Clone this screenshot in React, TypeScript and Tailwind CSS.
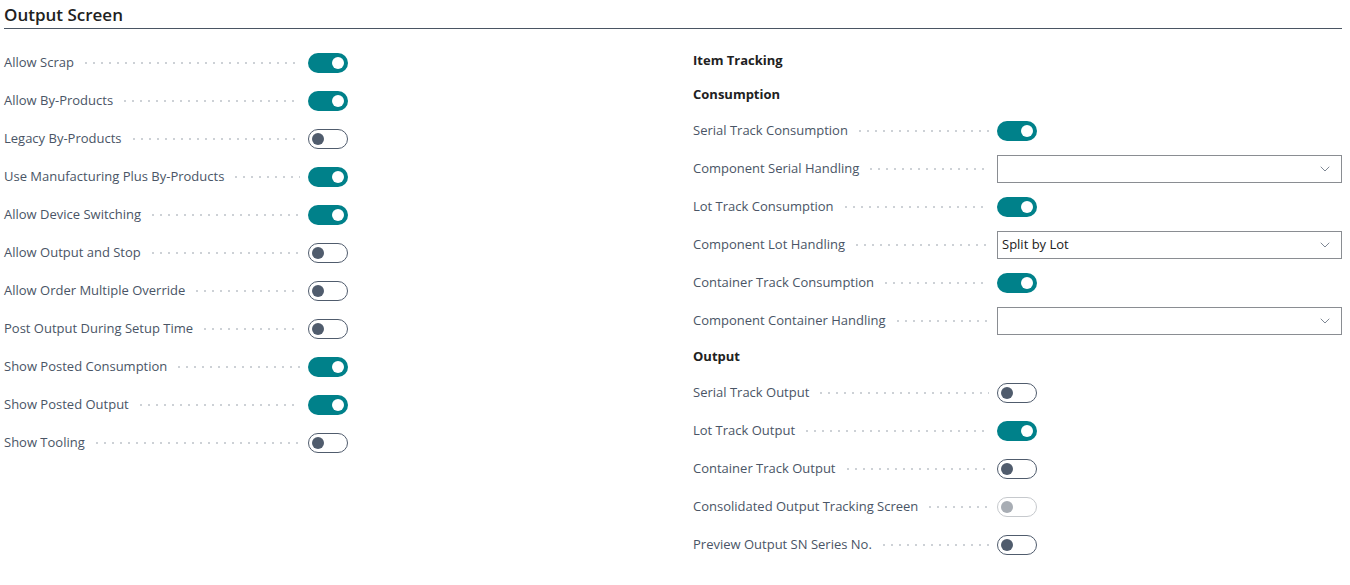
import { ChevronDown } from 'lucide-react';

type Row =
  | { kind: 'toggle'; label: string; on: boolean; disabled?: boolean }
  | { kind: 'select'; label: string; value: string }
  | { kind: 'heading'; label: string };

const leftRows: Row[] = [
  { kind: 'toggle', label: 'Allow Scrap', on: true },
  { kind: 'toggle', label: 'Allow By-Products', on: true },
  { kind: 'toggle', label: 'Legacy By-Products', on: false },
  { kind: 'toggle', label: 'Use Manufacturing Plus By-Products', on: true },
  { kind: 'toggle', label: 'Allow Device Switching', on: true },
  { kind: 'toggle', label: 'Allow Output and Stop', on: false },
  { kind: 'toggle', label: 'Allow Order Multiple Override', on: false },
  { kind: 'toggle', label: 'Post Output During Setup Time', on: false },
  { kind: 'toggle', label: 'Show Posted Consumption', on: true },
  { kind: 'toggle', label: 'Show Posted Output', on: true },
  { kind: 'toggle', label: 'Show Tooling', on: false },
];

const rightRows: Row[] = [
  { kind: 'heading', label: 'Item Tracking' },
  { kind: 'heading', label: 'Consumption' },
  { kind: 'toggle', label: 'Serial Track Consumption', on: true },
  { kind: 'select', label: 'Component Serial Handling', value: '' },
  { kind: 'toggle', label: 'Lot Track Consumption', on: true },
  { kind: 'select', label: 'Component Lot Handling', value: 'Split by Lot' },
  { kind: 'toggle', label: 'Container Track Consumption', on: true },
  { kind: 'select', label: 'Component Container Handling', value: '' },
  { kind: 'heading', label: 'Output' },
  { kind: 'toggle', label: 'Serial Track Output', on: false },
  { kind: 'toggle', label: 'Lot Track Output', on: true },
  { kind: 'toggle', label: 'Container Track Output', on: false },
  { kind: 'toggle', label: 'Consolidated Output Tracking Screen', on: false, disabled: true },
  { kind: 'toggle', label: 'Preview Output SN Series No.', on: false },
];

function Toggle({ on, disabled }: { on: boolean; disabled?: boolean }) {
  if (on) {
    return (
      <div className="w-10 h-5 rounded-full bg-[#00818a] flex items-center justify-end px-[4px]">
        <div className="w-3 h-3 rounded-full bg-white" />
      </div>
    );
  }
  return (
    <div
      className={`w-10 h-5 rounded-full border flex items-center px-[3px] ${
        disabled ? 'border-[#c6c9cd]' : 'border-[#505c6d]'
      }`}
    >
      <div className={`w-3 h-3 rounded-full ${disabled ? 'bg-[#a8adb4]' : 'bg-[#505c6d]'}`} />
    </div>
  );
}

function Field({ row }: { row: Row }) {
  if (row.kind === 'heading') {
    return (
      <div className="h-[34px] flex items-center text-[13px] font-bold text-[#212121]">{row.label}</div>
    );
  }
  return (
    <div className="h-[38px] flex items-center gap-2">
      <div className="w-[296px] flex items-center gap-2 shrink-0">
        <span className="text-[#4a5566] whitespace-nowrap">{row.label}</span>
        <span className="flex-1 h-[2px] bg-[radial-gradient(circle,#cdd1d6_1px,transparent_1.2px)] bg-[length:8px_2px]" />
      </div>
      {row.kind === 'toggle' ? (
        <Toggle on={row.on} disabled={row.disabled} />
      ) : (
        <div className="flex-1 h-[28px] border border-[#8a8d92] flex items-center justify-between pl-[4px] pr-[8px] text-[#212121]">
          <span>{row.value}</span>
          <ChevronDown className="w-4 h-4 text-[#505c6d]" strokeWidth={1.1} />
        </div>
      )}
    </div>
  );
}

export default function App() {
  return (
    <div className="w-[1350px] h-[585px] bg-white px-[4px] text-[13px] font-['Open_Sans','Noto_Sans',sans-serif]">
      <div className="w-[1338px]">
        <div className="h-[28px] flex items-center text-[17px] font-semibold text-[#212121] pt-[2px]">
          Output Screen
        </div>
        <div className="h-px bg-[#4a5563]" />
        <div className="grid grid-cols-[689px_1fr] pt-[15px]">
          <div className="flex flex-col">
            {leftRows.map(r => (
              <Field key={r.label} row={r} />
            ))}
          </div>
          <div className="flex flex-col">
            {rightRows.map(r => (
              <Field key={r.label} row={r} />
            ))}
          </div>
        </div>
      </div>
    </div>
  );
}
